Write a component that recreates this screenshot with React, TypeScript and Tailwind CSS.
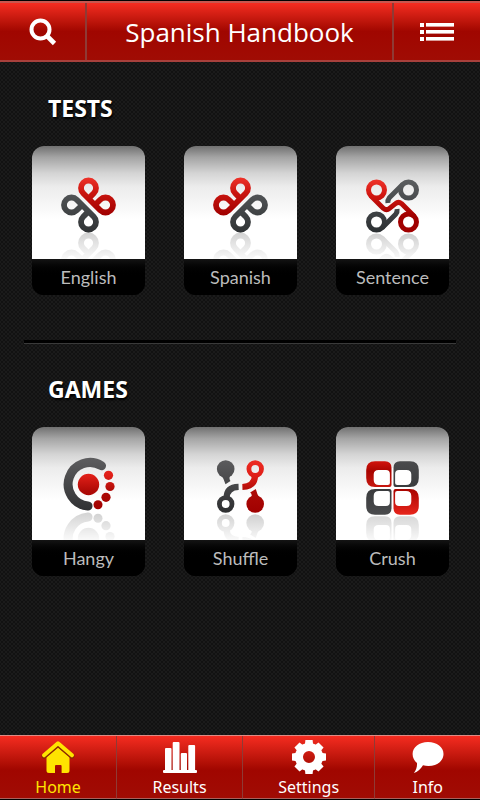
import React from 'react';

interface Tile {
  label: string;
  floor: number;
  icon: React.ReactNode;
}

const CloverHalf: React.FC = () => (
  <path d="M0 -6.4 L5.3 -11.7 A7.5 7.5 0 1 0 -5.3 -11.7 L11.7 5.3 A7.5 7.5 0 1 0 11.7 -5.3 L6.4 0" />
);

const cloverIcon = (
  <g fill="none" strokeWidth="5.8" strokeLinejoin="round">
    <g stroke="url(#redClover)" transform="translate(56.5 59)"><CloverHalf /></g>
    <g stroke="url(#darkCloverTurned)" transform="translate(56.5 59) rotate(180)"><CloverHalf /></g>
  </g>
);

const linkIcon = (
  <g fill="none" strokeWidth="5" strokeLinejoin="round" transform="translate(56.5 60)">
    <g stroke="url(#darkLink)">
      <circle cx="16" cy="-16" r="8" />
      <circle cx="-16" cy="16" r="8" />
      <path d="M10.3 -21.7 L-3.2 -8.2 Q-5 -6 -4.6 -3" />
      <path d="M-10.3 21.7 L3.2 8.2 Q5 6 4.6 3" />
    </g>
    <g stroke="url(#redLink)">
      <circle cx="-16" cy="-16" r="8" />
      <circle cx="16" cy="16" r="8" />
      <path d="M-21.7 -10.3 L-9 2.4 Q-6 5 -3 2.4 L3 -2.4 Q6 -5 9 -2.4 L21.7 10.3" />
    </g>
  </g>
);

const orbitIcon = (
  <g>
    <path d="M69.5 38.8 A21.8 21.8 0 1 0 56 79" fill="none" stroke="url(#dark)" strokeWidth="9" strokeLinecap="round" />
    <g fill="url(#red)">
      <circle cx="56.5" cy="57.5" r="10.7" />
      <circle cx="76.5" cy="48.3" r="4.6" />
      <circle cx="78" cy="59.5" r="4.6" />
      <circle cx="74" cy="70.3" r="4.6" />
      <circle cx="66" cy="77.7" r="4.5" />
    </g>
  </g>
);

const shuffleIcon = (
  <g>
    <g fill="url(#dark)">
      <circle cx="41.7" cy="42" r="8.8" />
      <path d="M37.5 48 Q39.5 51.5 41.5 57.3 L46.5 54 Q44.8 52 46 48 Z" />
    </g>
    <g fill="none" stroke="url(#dark)">
      <circle cx="41.7" cy="77" r="6.3" strokeWidth="4.8" />
      <path d="M42.7 71 Q42.5 60.3 54.6 59.9" strokeWidth="6.2" />
    </g>
    <g fill="none" stroke="url(#red)">
      <circle cx="71.2" cy="42" r="6.3" strokeWidth="4.8" />
      <path d="M71 49 Q70.5 59.6 58.4 60" strokeWidth="6.2" />
    </g>
    <g fill="url(#red)">
      <circle cx="71.2" cy="77" r="8.8" />
      <path d="M67 71 Q68.8 67.5 66.2 65.6 L71.8 62 Q73 67 75.5 71 Z" />
    </g>
  </g>
);

const Petal: React.FC = () => (
  <path
    fillRule="evenodd"
    d="M-1 -3 V-20 Q-1 -26.7 -7.5 -26.7 H-17.5 Q-26.3 -26.7 -26.3 -18 V-10 Q-26.3 -1 -17.5 -1 H-3 Q-1 -1 -1 -3 Z M-2.6 -5 Q-2.6 -3 -4.6 -3 H-13.5 Q-18.8 -3 -18.8 -8 V-13.5 Q-18.8 -18 -14 -18 H-6.5 Q-2.6 -18 -2.6 -14 Z"
  />
);

const petalsIcon = (
  <g transform="translate(56.5 61)">
    <rect x="-20" y="-20" width="40" height="40" fill="#fff" />
    <g fill="url(#redPetal)"><Petal /></g>
    <g fill="url(#darkPetal)" transform="scale(-1 1)"><Petal /></g>
    <g fill="url(#darkPetal)" transform="scale(1 -1)"><Petal /></g>
    <g fill="url(#redPetalLow)" transform="scale(-1 -1)"><Petal /></g>
  </g>
);

const tests: Tile[] = [
  { label: 'English', floor: 86.5, icon: cloverIcon },
  { label: 'Spanish', floor: 86.5, icon: <g transform="translate(113 0) scale(-1 1)">{cloverIcon}</g> },
  { label: 'Sentence', floor: 87, icon: linkIcon },
];

const games: Tile[] = [
  { label: 'Hangy', floor: 84.5, icon: orbitIcon },
  { label: 'Shuffle', floor: 86.5, icon: shuffleIcon },
  { label: 'Crush', floor: 88.5, icon: petalsIcon },
];

const Gradients: React.FC = () => (
  <svg width="0" height="0" className="absolute" aria-hidden="true">
    <defs>
      <linearGradient id="red" gradientUnits="userSpaceOnUse" x1="0" y1="32" x2="0" y2="86">
        <stop offset="0" stopColor="#ee2c24" />
        <stop offset="0.3" stopColor="#e01f18" />
        <stop offset="0.6" stopColor="#ad0a06" />
        <stop offset="1" stopColor="#a00000" />
      </linearGradient>
      <linearGradient id="dark" gradientUnits="userSpaceOnUse" x1="0" y1="32" x2="0" y2="86">
        <stop offset="0" stopColor="#5c5c5e" />
        <stop offset="1" stopColor="#2e2f31" />
      </linearGradient>
      <linearGradient id="redClover" gradientUnits="userSpaceOnUse" x1="0" y1="-28" x2="0" y2="10">
        <stop offset="0" stopColor="#f0332a" />
        <stop offset="0.4" stopColor="#cb1610" />
        <stop offset="1" stopColor="#a00000" />
      </linearGradient>
      <linearGradient id="darkCloverTurned" gradientUnits="userSpaceOnUse" x1="0" y1="10" x2="0" y2="-28">
        <stop offset="0" stopColor="#4f5254" />
        <stop offset="1" stopColor="#303335" />
      </linearGradient>
      <linearGradient id="redLink" gradientUnits="userSpaceOnUse" x1="0" y1="-27" x2="0" y2="10">
        <stop offset="0" stopColor="#f0332a" />
        <stop offset="0.45" stopColor="#d01610" />
        <stop offset="1" stopColor="#a00000" />
      </linearGradient>
      <linearGradient id="darkLink" gradientUnits="userSpaceOnUse" x1="0" y1="-27" x2="0" y2="27">
        <stop offset="0" stopColor="#5c5e60" />
        <stop offset="1" stopColor="#2b2f32" />
      </linearGradient>
      <linearGradient id="redPetal" gradientUnits="userSpaceOnUse" x1="0" y1="-27" x2="0" y2="-1">
        <stop offset="0" stopColor="#d2140c" />
        <stop offset="0.4" stopColor="#a80400" />
        <stop offset="1" stopColor="#c81810" />
      </linearGradient>
      <linearGradient id="redPetalLow" gradientUnits="userSpaceOnUse" x1="0" y1="-27" x2="0" y2="-1">
        <stop offset="0" stopColor="#e8261c" />
        <stop offset="1" stopColor="#a80400" />
      </linearGradient>
      <linearGradient id="darkPetal" gradientUnits="userSpaceOnUse" x1="0" y1="-27" x2="0" y2="-1">
        <stop offset="0" stopColor="#4a4b4d" />
        <stop offset="1" stopColor="#3a3b3d" />
      </linearGradient>
      <linearGradient id="fade" x1="0" y1="0" x2="0" y2="1">
        <stop offset="0" stopColor="#fff" stopOpacity="0.78" />
        <stop offset="1" stopColor="#fff" stopOpacity="0.97" />
      </linearGradient>
    </defs>
  </svg>
);

const TileButton: React.FC<Tile> = ({ label, floor, icon }) => (
  <button type="button" className="w-[113px] overflow-hidden rounded-xl bg-black">
    <svg viewBox="0 0 113 113" className="block w-full bg-[linear-gradient(#707070,#a4a4a4_10%,#d4d4d4_24%,#ececec_36%,#fff_65%)]" aria-hidden="true">
      <g className="grayscale" transform={`translate(0 ${floor * 2}) scale(1 -1)`}>{icon}</g>
      <rect x="0" y={floor} width="113" height={113 - floor} fill="url(#fade)" />
      {icon}
    </svg>
    <span className="block h-9 bg-linear-to-b from-[#141414] to-black to-50% font-[Lato,sans-serif] text-lg leading-9 text-[#bcbcbc]">{label}</span>
  </button>
);

const TileSection: React.FC<{ title: string; tiles: Tile[] }> = ({ title, tiles }) => (
  <section className="pr-[31px] pl-8">
    <h2 className="pl-4 text-[23px] leading-8 font-bold text-white [text-shadow:1px_2px_2px_#000]">{title}</h2>
    <div className="mt-[22px] flex justify-between">
      {tiles.map(tile => <TileButton key={tile.label} {...tile} />)}
    </div>
  </section>
);

const HomeIcon: React.FC = () => (
  <svg width="34" height="34" viewBox="0 0 34 34" className="shrink-0" aria-hidden="true">
    <path d="M5.5 17 L17 7.5 L28.5 17 V30.5 Q28.5 33 26 33 H20.6 V26 Q20.6 25 19.6 25 H15 Q14 25 14 26 V33 H8 Q5.5 33 5.5 30.5 Z" fill="#ffe400" />
    <path d="M3 16.3 L17 4.3 L31 16.3" fill="none" stroke="#8a2a00" strokeWidth="5" strokeLinecap="round" strokeLinejoin="round" />
    <path d="M3 15.3 L17 3.3 L31 15.3" fill="none" stroke="#ffe400" strokeWidth="4" strokeLinecap="round" strokeLinejoin="round" />
  </svg>
);

const ResultsIcon: React.FC = () => (
  <svg width="34" height="34" viewBox="0 0 34 34" fill="#fff" className="shrink-0" aria-hidden="true">
    <rect x="0" y="30" width="34" height="3" rx="1" />
    <rect x="2" y="8" width="6.5" height="24" rx="1" />
    <rect x="9.7" y="2" width="6.8" height="30" rx="1" />
    <rect x="17.8" y="13" width="6.2" height="19" rx="1" />
    <rect x="25.3" y="5" width="6.8" height="27" rx="1" />
  </svg>
);

const SettingsIcon: React.FC = () => (
  <svg width="34" height="34" viewBox="0 0 34 34" className="shrink-0" aria-hidden="true">
    <g fill="#fff" transform="translate(17 17)">
      {[0, 45, 90, 135, 180, 225, 270, 315].map(angle => (
        <path key={angle} d="M-3.6 -17 H3.6 L4.4 -10 H-4.4 Z" transform={`rotate(${angle})`} />
      ))}
      <circle r="10" fill="none" stroke="#fff" strokeWidth="8" />
    </g>
  </svg>
);

const InfoIcon: React.FC = () => (
  <svg width="34" height="34" viewBox="0 0 34 34" className="shrink-0" aria-hidden="true">
    <path d="M17 2 C26 2 32.5 7 32.5 14 C32.5 21 26 26 17.5 26 C15.5 26 13.8 25.8 12 25.3 C9.5 29.5 6.5 32 2.8 33 C5.2 30 6.2 26.8 6 23 C3.3 20.8 1.6 17.8 1.6 14 C1.6 7 8.2 2 17 2 Z" fill="#fff" />
  </svg>
);

const navItems = [
  { label: 'Home', icon: <HomeIcon />, active: true },
  { label: 'Results', icon: <ResultsIcon />, active: false },
  { label: 'Settings', icon: <SettingsIcon />, active: false },
  { label: 'Info', icon: <InfoIcon />, active: false },
];

const App: React.FC = () => (
  <div className="flex min-h-screen flex-col bg-[#1b1b1b] bg-[radial-gradient(circle,#121212_1px,transparent_1.5px),radial-gradient(circle,#121212_1px,transparent_1.5px)] bg-size-[4px_4px] bg-position-[0_0,2px_2px] font-['Noto_Sans','Open_Sans',sans-serif]">
    <Gradients />
    <header className="flex h-[62px] border-t border-black">
      <div className="flex w-full border-t-2 border-b-2 border-t-[#c8564f] border-b-[#a8403c] bg-linear-to-b from-[#f52c20] via-[#a00600] via-50% to-[#a00c04]">
        <button type="button" aria-label="Search" className="flex w-[87px] items-center justify-center border-r-2 border-[#8f3a35]">
          <svg width="28" height="28" viewBox="0 0 28 28" fill="none" stroke="#fff" aria-hidden="true">
            <circle cx="11.5" cy="11.5" r="9" strokeWidth="4" />
            <path d="M17.5 17.5 L25.5 25.5" strokeWidth="4.6" />
          </svg>
        </button>
        <h1 className="flex-1 text-center font-['Open_Sans','Noto_Sans',sans-serif] text-[26px] leading-[58px] text-white">Spanish Handbook</h1>
        <button type="button" aria-label="Menu" className="flex w-[88px] items-center justify-center border-l-2 border-[#8f3a35]">
          <svg width="34" height="20" viewBox="0 0 34 20" fill="#fff" aria-hidden="true">
            {[1, 8, 15].map(y => (
              <g key={y}>
                <rect x="0" y={y} width="4" height="4" />
                <rect x="6" y={y} width="28" height="3.6" />
              </g>
            ))}
          </svg>
        </button>
      </div>
    </header>
    <main className="flex-1 pt-[30px]">
      <TileSection title="TESTS" tiles={tests} />
      <hr className="mx-6 mt-[45px] mb-[29px] h-1 border-t-3 border-b border-t-black border-b-[#3a3a3a]" />
      <TileSection title="GAMES" tiles={games} />
    </main>
    <nav className="flex border-t border-[#e08a84] bg-black pb-px">
      {navItems.map(({ label, icon, active }) => (
        <button
          key={label}
          type="button"
          aria-current={active ? 'page' : undefined}
          className={`flex h-[63px] flex-auto flex-col items-center border-r border-b border-r-[#8f3a35] border-b-[#a8605c] bg-linear-to-b from-[#f52c20] via-[#a00600] via-55% to-[#a00c04] pt-1 last:border-r-0 ${active ? 'text-[#ffe400]' : 'text-white'}`}
        >
          {icon}
          <span className="text-base leading-[26px]">{label}</span>
        </button>
      ))}
    </nav>
  </div>
);

export default App;
